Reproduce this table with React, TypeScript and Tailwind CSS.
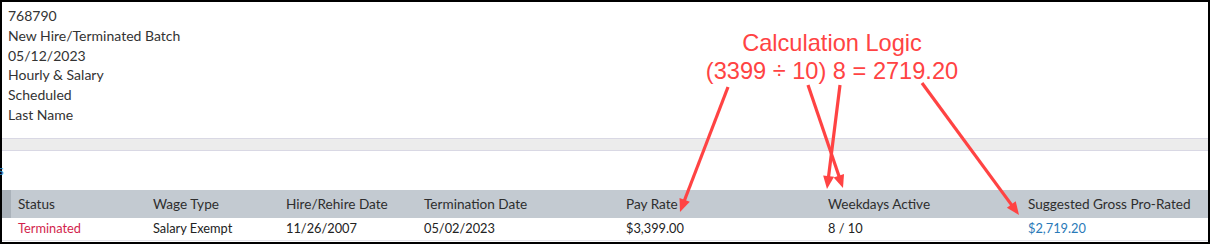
import React from 'react';

const info = ['768790', 'New Hire/Terminated Batch', '05/12/2023', 'Hourly & Salary', 'Scheduled', 'Last Name'];

const cols = [
  { head: 'Status', value: 'Terminated', w: 'w-[135px]', color: 'text-[#d21f4c]' },
  { head: 'Wage Type', value: 'Salary Exempt', w: 'w-[133px]', color: '' },
  { head: 'Hire/Rehire Date', value: '11/26/2007', w: 'w-[138px]', color: '' },
  { head: 'Termination Date', value: '05/02/2023', w: 'w-[202px]', color: '' },
  { head: 'Pay Rate', value: '$3,399.00', w: 'w-[202px]', color: '' },
  { head: 'Weekdays Active', value: '8 / 10', w: 'w-[200px]', color: '' },
  { head: 'Suggested Gross Pro-Rated', value: '$2,719.20', w: 'flex-1', color: 'text-[#2a7ab8]' },
];

// annotation arrows: [x1, y1, x2, y2] where x2,y2 is the tip
const arrows: [number, number, number, number][] = [
  [728, 87, 680, 212],
  [808, 85, 843, 188],
  [840, 85, 827, 189],
  [922, 83, 1019, 215],
];

const Arrow = ({ a }: { a: [number, number, number, number] }) => {
  const [x1, y1, x2, y2] = a;
  const len = Math.hypot(x2 - x1, y2 - y1);
  const ux = (x2 - x1) / len;
  const uy = (y2 - y1) / len;
  const head = 13;
  const half = 5.5;
  const bx = x2 - ux * head;
  const by = y2 - uy * head;
  const pts = `${x2},${y2} ${bx - uy * half},${by + ux * half} ${bx + uy * half},${by - ux * half}`;
  return (
    <g>
      <line x1={x1} y1={y1} x2={bx + ux * 2} y2={by + uy * 2} stroke="#ff4343" strokeWidth={3.2} />
      <polygon points={pts} fill="#ff4343" />
    </g>
  );
};

export default function App() {
  return (
    <div className="relative w-[1211px] h-[245px] bg-white overflow-hidden font-['Lato','Noto_Sans',sans-serif] text-[13px]">
      <div className="w-[1210px] h-[244px] border-2 border-black flex flex-col">
        {/* batch info */}
        <div className="pl-[6px] pt-[4px] text-[14px] text-[#333] leading-[19.8px]">
          {info.map((t) => (
            <div key={t}>{t}</div>
          ))}
        </div>

        <div className="mt-[13px] h-[13px] bg-[#ececec] border-y border-[#d9d8e4]" />

        <div className="h-[39px] flex items-center">
          <span className="-ml-[4px] text-[#2a7ab8]">s</span>
        </div>

        {/* table */}
        <div className="flex h-[28px] bg-[#c3cad1] text-[#2e2e2e] text-[13.6px]">
          <div className="w-[9px] bg-[#aab2ba]" />
          {cols.map((c) => (
            <div key={c.head} className={`flex items-center pl-[7px] ${c.w}`}>
              {c.head}
            </div>
          ))}
        </div>
        <div className="flex h-[23px] border-b border-[#e4e4ea] text-[#222] text-[12.8px]">
          <div className="w-[9px]" />
          {cols.map((c) => (
            <div key={c.head} className={`flex items-center pl-[7px] ${c.w} ${c.color}`}>
              {c.value}
            </div>
          ))}
        </div>
      </div>

      {/* annotation */}
      <div className="absolute left-[692px] top-[29px] w-[280px] text-center text-[23.6px] leading-[28px] text-[#ff4343] font-['Liberation_Sans',Arial,sans-serif]">
        <div>Calculation Logic</div>
        <div>(3399 ÷ 10) 8 = 2719.20</div>
      </div>
      <svg className="absolute inset-0 pointer-events-none" width={1211} height={245}>
        {arrows.map((a, i) => (
          <Arrow key={i} a={a} />
        ))}
      </svg>
    </div>
  );
}
